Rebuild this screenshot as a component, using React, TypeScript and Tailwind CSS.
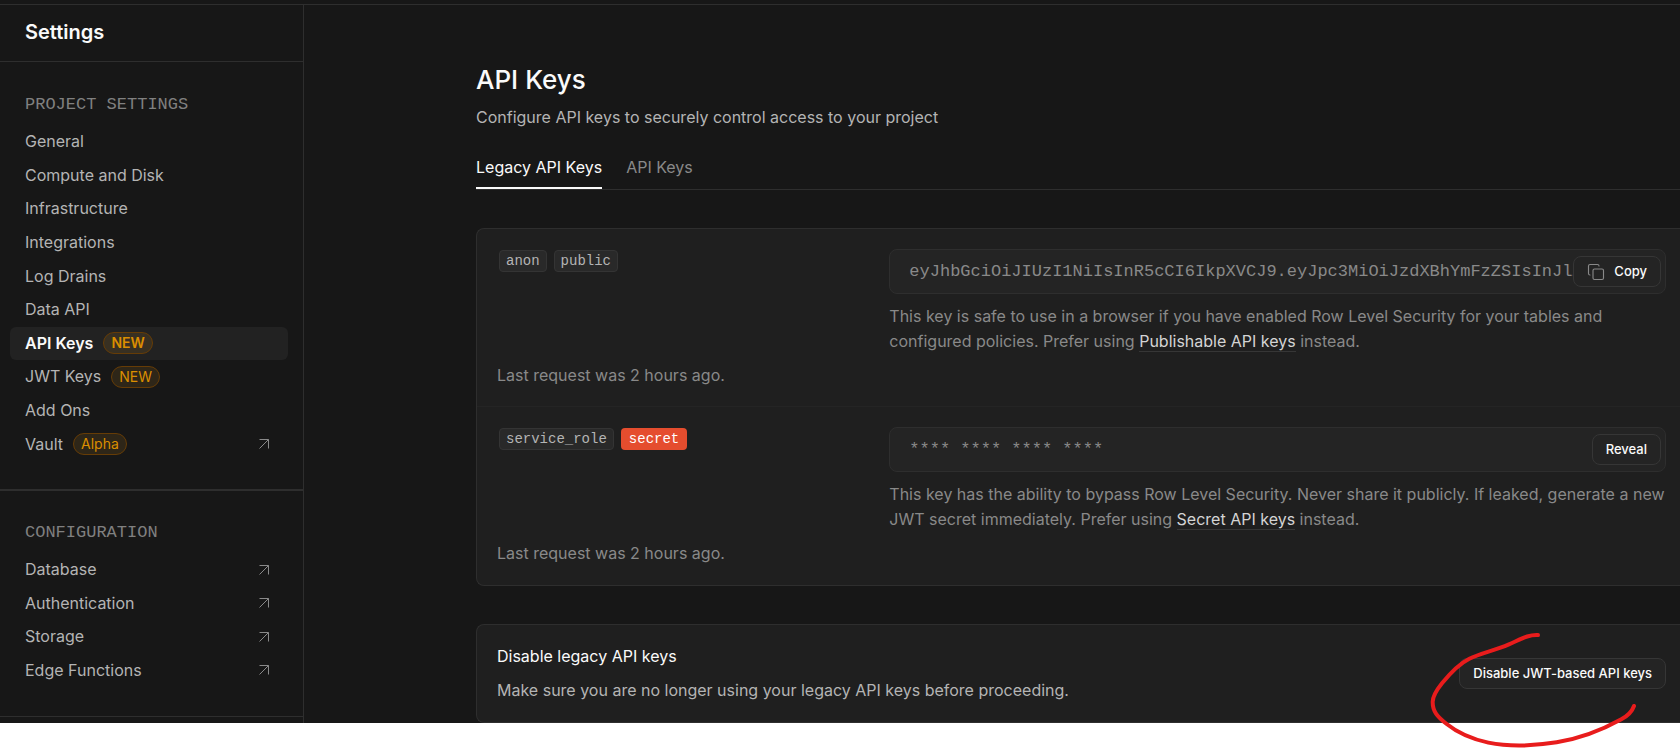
import { useState } from 'react'
import { Copy } from 'lucide-react'

interface MenuItem {
  name: string
  badge?: string
  external?: boolean
}

const PROJECT_ITEMS: MenuItem[] = [
  { name: 'General' },
  { name: 'Compute and Disk' },
  { name: 'Infrastructure' },
  { name: 'Integrations' },
  { name: 'Log Drains' },
  { name: 'Data API' },
  { name: 'API Keys', badge: 'NEW' },
  { name: 'JWT Keys', badge: 'NEW' },
  { name: 'Add Ons' },
  { name: 'Vault', badge: 'Alpha', external: true },
]

const CONFIG_ITEMS: MenuItem[] = [
  { name: 'Database', external: true },
  { name: 'Authentication', external: true },
  { name: 'Storage', external: true },
  { name: 'Edge Functions', external: true },
]

const ANON_KEY = 'eyJhbGciOiJIUzI1NiIsInR5cCI6IkpXVCJ9.eyJpc3MiOiJzdXBhYmFzZSIsInJlZ'

function ArrowOut() {
  return (
    <svg
      className="ml-auto"
      width="10"
      height="10"
      viewBox="0 0 10 10"
      fill="none"
      stroke="#898989"
      aria-hidden="true"
    >
      <path d="M0.5 0.5H9.5V9.5M9.5 0.5L0.5 9.5" />
    </svg>
  )
}

function MenuLink({ item, active }: { item: MenuItem; active: boolean }) {
  return (
    <li className="flex-1 flex">
      <a
        href="#"
        aria-current={active ? 'page' : undefined}
        className={
          active
            ? 'flex-1 flex items-center gap-[10px] rounded-md bg-[#222222] pl-[15px] pr-[19px] font-semibold text-[#fafafa]'
            : 'flex-1 flex items-center gap-[10px] rounded-md pl-[15px] pr-[19px] text-[#b4b4b4] hover:text-[#fafafa]'
        }
      >
        {item.name}
        {item.badge && (
          <span className="h-[22px] flex items-center rounded-full border border-[#663c06] bg-[#ffb2241a] px-[7px] text-sm text-[#db8e00]">
            {item.badge}
          </span>
        )}
        {item.external && <ArrowOut />}
      </a>
    </li>
  )
}

function Tag({ children }: { children: string }) {
  return (
    <code className="h-[22px] flex items-center rounded-sm border border-[#343434] bg-[#292929] px-[6px] font-['Liberation_Mono',monospace] text-sm text-[#b4b4b4]">
      {children}
    </code>
  )
}

const fieldClass =
  "w-full h-[45px] rounded-lg border border-[#2e2e2e] bg-[#242424] pl-[19px] pr-2 font-['Liberation_Mono',monospace] text-[17px] text-[#898989] outline-none"
const buttonClass =
  'h-[31px] flex items-center rounded-lg border border-[#363636] bg-[#242424] px-[13px] text-[13px] font-medium text-[#fafafa] hover:bg-[#2e2e2e]'
const linkClass = 'border-b border-[#363636] text-[#d4d4d4]'

export default function ApiKeysSettings() {
  const [tab, setTab] = useState('legacy')

  return (
    <div className="min-h-screen bg-white font-['Inter',sans-serif] text-base leading-[25px] text-[#b4b4b4]">
      <div className="border-t-4 border-[#171717] bg-[#171717]">
        <div className="flex border-t border-[#2e2e2e]">
          {/* Sidebar */}
          <aside className="w-[304px] shrink-0 border-r border-[#2e2e2e] pb-[6px]">
            <header className="h-[57px] flex items-center border-b border-[#2e2e2e] px-[25px] pb-[2px]">
              <h2 className="text-xl font-semibold text-[#fafafa]">Settings</h2>
            </header>

            <nav>
              <section className="border-b-2 border-[#2e2e2e] pt-[33px] pb-7">
                <h3 className="mb-[10px] px-[25px] font-['Liberation_Mono',monospace] text-[17px] leading-5 text-[#808080]">
                  PROJECT SETTINGS
                </h3>
                <ul className="h-[336px] flex flex-col pl-[10px] pr-[15px]">
                  {PROJECT_ITEMS.map((item) => (
                    <MenuLink key={item.name} item={item} active={item.name === 'API Keys'} />
                  ))}
                </ul>
              </section>

              <section className="border-b border-[#2e2e2e] pt-8 pb-[29px]">
                <h3 className="mb-[10px] px-[25px] font-['Liberation_Mono',monospace] text-[17px] leading-5 text-[#808080]">
                  CONFIGURATION
                </h3>
                <ul className="h-[134px] flex flex-col pl-[10px] pr-[15px]">
                  {CONFIG_ITEMS.map((item) => (
                    <MenuLink key={item.name} item={item} active={false} />
                  ))}
                </ul>
              </section>
            </nav>
          </aside>

          {/* Content */}
          <main className="flex-1 min-w-0 pt-[58px] pl-[172px]">
            <h1 className="text-[26px] leading-[34px] font-medium text-[#fafafa]">API Keys</h1>
            <p className="mt-2">Configure API keys to securely control access to your project</p>

            <div role="tablist" className="mt-6 flex gap-6 border-b border-[#2e2e2e]">
              <button
                role="tab"
                aria-selected={tab === 'legacy'}
                onClick={() => setTab('legacy')}
                className={
                  tab === 'legacy'
                    ? 'h-[35px] border-b-2 border-[#fafafa] pb-[6px] text-[#fafafa]'
                    : 'h-[35px] border-b-2 border-transparent pb-[6px] text-[#898989]'
                }
              >
                Legacy API Keys
              </button>
              <button
                role="tab"
                aria-selected={tab === 'keys'}
                onClick={() => setTab('keys')}
                className={
                  tab === 'keys'
                    ? 'h-[35px] border-b-2 border-[#fafafa] pb-[6px] text-[#fafafa]'
                    : 'h-[35px] border-b-2 border-transparent pb-[6px] text-[#898989]'
                }
              >
                API Keys
              </button>
            </div>

            {/* Keys */}
            <div className="mt-[38px] rounded-l-lg border border-r-0 border-[#2e2e2e] bg-[#1f1f1f] text-[#898989]">
              <div className="border-b border-[#242424] pt-5 pb-[18px] pl-5 pr-[14px]">
                <div className="grid grid-cols-[1fr_2fr] gap-1">
                  <div className="flex items-start gap-[7px] pt-px pl-[2px]">
                    <Tag>anon</Tag>
                    <Tag>public</Tag>
                  </div>
                  <div>
                    <div className="relative">
                      <input aria-label="anon key" readOnly value={ANON_KEY} className={fieldClass} />
                      <div className="absolute inset-y-0 right-[5px] flex items-center">
                        <button className={buttonClass}>
                          <Copy size={18} strokeWidth={1.5} className="mr-[9px] text-[#898989]" />
                          Copy
                        </button>
                      </div>
                    </div>
                    <p className="mt-[10px]">
                      This key is safe to use in a browser if you have enabled Row Level Security for your tables and
                      configured policies. Prefer using <a href="#" className={linkClass}>Publishable API keys</a>{' '}
                      instead.
                    </p>
                  </div>
                </div>
                <p className="mt-[9px]">Last request was 2 hours ago.</p>
              </div>

              <div className="pt-5 pb-[19px] pl-5 pr-[14px]">
                <div className="grid grid-cols-[1fr_2fr] gap-1">
                  <div className="flex items-start gap-[7px] pt-px pl-[2px]">
                    <Tag>service_role</Tag>
                    <code className="h-[22px] flex items-center rounded-sm bg-[#e54d2e] px-2 font-['Liberation_Mono',monospace] text-sm text-white">
                      secret
                    </code>
                  </div>
                  <div>
                    <div className="relative">
                      <input
                        aria-label="service_role key"
                        readOnly
                        value="**** **** **** ****"
                        className={fieldClass}
                      />
                      <div className="absolute inset-y-0 right-[5px] flex items-center">
                        <button className={buttonClass}>Reveal</button>
                      </div>
                    </div>
                    <p className="mt-[10px]">
                      This key has the ability to bypass Row Level Security. Never share it publicly. If leaked,
                      generate a new JWT secret immediately. Prefer using{' '}
                      <a href="#" className={linkClass}>Secret API keys</a> instead.
                    </p>
                  </div>
                </div>
                <p className="mt-[9px]">Last request was 2 hours ago.</p>
              </div>
            </div>

            {/* Disable */}
            <div className="mt-[38px] flex items-center justify-between rounded-l-lg border border-r-0 border-[#2e2e2e] bg-[#1f1f1f] py-[19px] pl-5 pr-[14px]">
              <div>
                <h3 className="text-[#fafafa]">Disable legacy API keys</h3>
                <p className="mt-[9px]">Make sure you are no longer using your legacy API keys before proceeding.</p>
              </div>
              <div className="relative">
                <button className={buttonClass}>Disable JWT-based API keys</button>
                {/* Hand-drawn marker around the button */}
                <svg
                  className="pointer-events-none absolute right-[21px] -top-[30px] h-[122px] w-[220px]"
                  viewBox="75 84 660 366"
                  fill="none"
                  stroke="#e81c1c"
                  strokeWidth="12"
                  strokeLinecap="round"
                  strokeLinejoin="round"
                  aria-hidden="true"
                >
                  <path d="M414 105C385 103 362 118 325 134C285 151 240 160 208 176C178 191 150 220 126 250C106 275 98 290 98 306C98 335 112 350 140 372C175 400 215 417 265 428C325 440 400 438 470 427C545 415 610 388 664 358C686 346 697 332 702 318" />
                </svg>
              </div>
            </div>
          </main>
        </div>
      </div>
    </div>
  )
}
